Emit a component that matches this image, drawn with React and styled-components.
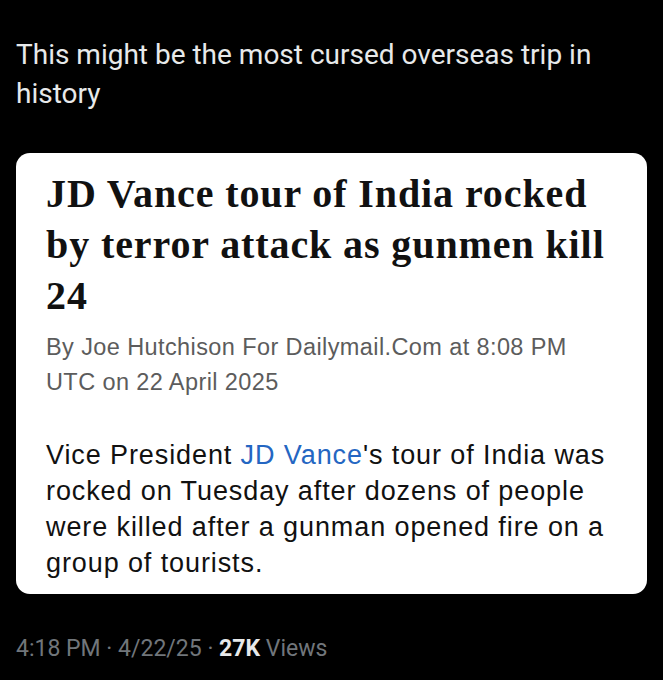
import React from 'react';
import styled, { createGlobalStyle } from 'styled-components';

const GlobalStyle = createGlobalStyle`
  html, body {
    margin: 0;
    padding: 0;
    background: #000;
  }
`;

const Page = styled.div`
  width: 663px;
  height: 680px;
  background: #000;
  padding: 35px 16px 0 16px;
  box-sizing: border-box;
  display: flex;
  flex-direction: column;
`;

const TweetText = styled.p`
  margin: 0;
  color: #e7e9ea;
  font-family: Roboto, 'Liberation Sans', sans-serif;
  font-size: 28px;
  line-height: 39px;
`;

const Card = styled.div`
  margin-top: 40px;
  background: #fff;
  border-radius: 14px;
  padding: 15px 30px 13px 30px;
`;

const Headline = styled.h1`
  margin: 0;
  font-family: 'Liberation Serif', 'DejaVu Serif', serif;
  font-weight: 700;
  font-size: 40px;
  line-height: 51px;
  color: #111;
  letter-spacing: 0.9px;
`;

const Byline = styled.p`
  margin: 9px 0 0;
  font-family: 'Liberation Sans', Arial, sans-serif;
  font-size: 23.5px;
  line-height: 35px;
  letter-spacing: 0.4px;
  color: #5c5c5c;
`;

const Body = styled.p`
  margin: 37px 0 0;
  font-family: 'Liberation Sans', Arial, sans-serif;
  font-size: 27px;
  line-height: 36px;
  letter-spacing: 0.9px;
  color: #111;
`;

const Link = styled.span`
  color: #2466c2;
`;

const Meta = styled.div`
  margin-top: 40px;
  font-family: Roboto, 'Liberation Sans', sans-serif;
  font-size: 23px;
  line-height: 30px;
  color: #71767b;
`;

const Strong = styled.span`
  color: #e7e9ea;
  font-weight: 700;
`;

export default function App() {
  return (
    <>
      <GlobalStyle />
      <Page>
        <TweetText>This might be the most cursed overseas trip in history</TweetText>
        <Card>
          <Headline>JD Vance tour of India rocked by terror attack as gunmen kill 24</Headline>
          <Byline>By Joe Hutchison For Dailymail.Com at 8:08 PM UTC on 22 April 2025</Byline>
          <Body>
            Vice President <Link>JD Vance</Link>'s tour of India was rocked on Tuesday after
            dozens of people were killed after a gunman opened fire on a group of tourists.
          </Body>
        </Card>
        <Meta>
          4:18 PM · 4/22/25 · <Strong>27K</Strong> Views
        </Meta>
      </Page>
    </>
  );
}
